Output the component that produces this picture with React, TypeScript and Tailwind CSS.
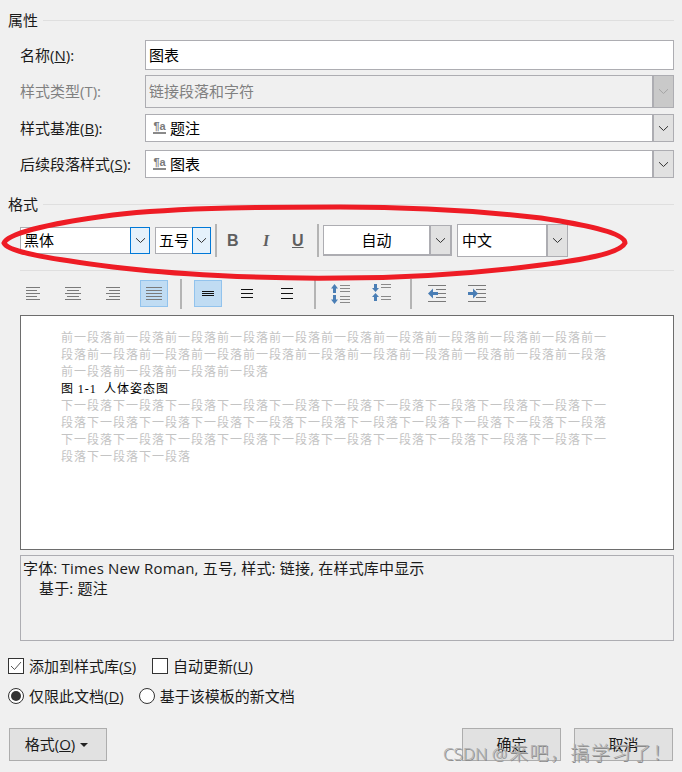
import React from 'react';

const uiFont = "font-['Open_Sans','Noto_Sans_CJK_SC',sans-serif]";

const repeatText = (unit: string, count: number) => unit.repeat(count);

const Chevron: React.FC<{ color?: string }> = ({ color = '#333333' }) => (
    <svg width="11" height="7" viewBox="0 0 11 7" fill="none">
        <path d="M1 1.200 5.500 5.500 10 1.200" stroke={color} strokeWidth="1" />
    </svg>
);

const DropButton: React.FC<{ disabled?: boolean; width?: string }> = ({ disabled, width = 'w-[21px]' }) => (
    <div className={`flex shrink-0 items-center justify-center self-stretch border-l-2 border-[#adadb2] ${width} ${disabled ? 'bg-[#c9c9c9]' : 'bg-[#e1e1e1]'}`}>
        <Chevron color={disabled ? '#a5a5a5' : '#333333'} />
    </div>
);

const StyleIcon: React.FC = () => (
    <span className="mr-[4px] ml-[7px] flex h-[14px] w-[13px] flex-col items-center font-['Liberation_Sans',sans-serif] text-[11px] leading-[10px] font-bold text-[#7a7a7a]">
        <span>¶a</span>
        <span className="mt-[1px] h-[2px] w-[13px] bg-[#8a8a8a]"></span>
    </span>
);

const FormRow: React.FC<{ label: React.ReactNode; height: string; mb: string; disabled?: boolean; children: React.ReactNode }> = ({ label, height, mb, disabled, children }) => (
    <div className={`flex items-center ${height} ${mb}`}>
        <div className={`w-[125px] shrink-0 text-[15px] ${disabled ? 'text-[#808080]' : 'text-[#1a1a1a]'}`}>{label}</div>
        {children}
    </div>
);

const Heading: React.FC<{ title: string; className?: string }> = ({ title, className }) => (
    <div className={`flex items-center pl-[8px] text-[15px] leading-[20px] text-[#1a1a1a] ${className ?? ''}`}>
        <span className="pr-[5px]">{title}</span>
        <div className="h-px flex-1 bg-[#dfdfdf]"></div>
    </div>
);

const VSep: React.FC<{ h: string; mx: string }> = ({ h, mx }) => <div className={`w-[2px] shrink-0 bg-[#b4b4b4] ${h} ${mx}`}></div>;

const Lines: React.FC<{ widths: number[]; align?: 'left' | 'center' | 'right'; color?: string; gap: number }> = ({ widths, align = 'left', color = '#7a7a7a', gap }) => {
    const max = Math.max(...widths);
    return (
        <svg width={max} height={(widths.length - 1) * gap + 1}>
            {widths.map((w, i) => {
                const x = align === 'left' ? 0 : align === 'center' ? (max - w) / 2 : max - w;
                return <rect key={i} x={x} y={i * gap} width={w} height="1" fill={color} />;
            })}
        </svg>
    );
};

const ToolSlot: React.FC<{ active?: boolean; children: React.ReactNode; className?: string }> = ({ active, children, className }) => (
    <div className={`flex h-[27px] w-[28px] shrink-0 items-center justify-center border ${active ? 'border-[#92c3ed] bg-[#c0dcf3]' : 'border-transparent'} ${className ?? ''}`}>
        {children}
    </div>
);

const SpacingIcon: React.FC<{ inward?: boolean }> = ({ inward }) => (
    <svg width="20" height="20" viewBox="0 0 20 20">
        <g fill="#4a7eb5">
            {inward ? (
                <>
                    <path d="M2 0h3v4h2L3.500 8 0 4h2z" />
                    <path d="M3.500 9 7 13H5v4H2v-4H0z" />
                </>
            ) : (
                <>
                    <path d="M3.500 0 7 4.500H5V9H2V4.500H0z" />
                    <path d="M2 11h3v4.500h2L3.500 20 0 15.500h2z" />
                </>
            )}
        </g>
        <g fill="#8a8a8a">
            {inward ? (
                <>
                    <rect x="9" y="0" width="10" height="1" />
                    <rect x="9" y="3" width="10" height="1" />
                    <rect x="9" y="12" width="10" height="1" />
                    <rect x="9" y="15" width="10" height="1" />
                </>
            ) : (
                <>
                    <rect x="9" y="1" width="10" height="1" />
                    <rect x="9" y="4" width="10" height="1" />
                    <rect x="9" y="7" width="10" height="1" />
                    <rect x="9" y="12" width="10" height="1" />
                    <rect x="9" y="15" width="10" height="1" />
                    <rect x="9" y="18" width="10" height="1" />
                </>
            )}
        </g>
    </svg>
);

const IndentIcon: React.FC<{ increase?: boolean }> = ({ increase }) => (
    <svg width="18" height="17" viewBox="0 0 18 17">
        <g fill="#7a7a7a">
            <rect x="0" y="0" width="18" height="1" />
            <rect x="8" y="4" width="10" height="1" />
            <rect x="8" y="8" width="10" height="1" />
            <rect x="8" y="12" width="10" height="1" />
            <rect x="0" y="16" width="18" height="1" />
        </g>
        <path
            d={increase ? 'M0 7h5V3.500L10 8.500l-5 5V10H0z' : 'M10 7H5V3.500L0 8.500l5 5V10h5z'}
            fill="#4a7eb5"
        />
    </svg>
);

const App: React.FC = () => {
    const before = [
        repeatText('前一段落', 10) + '前一',
        repeatText('段落前一', 10) + '段落',
        repeatText('前一段落', 4),
    ];
    const after = [
        repeatText('下一段落', 10) + '下一',
        repeatText('段落下一', 10) + '段落',
        repeatText('下一段落', 10) + '下一',
        '段落下一段落下一段落',
    ];

    return (
        <div className={`relative h-[772px] w-[682px] overflow-hidden bg-[#f0f0f0] ${uiFont}`}>
            <div className="px-[8px] pt-[10px]">
                <Heading title="属性" className="mb-[10px] -ml-[8px]" />

                <div className="pr-0 pl-[12px]">
                    <FormRow label={<>名称(<u>N</u>):</>} height="h-[30px]" mb="mb-[5px]">
                        <div className="flex h-full flex-1 items-center border border-[#adadb2] bg-white pl-[3px] text-[15px] text-black">图表</div>
                    </FormRow>
                    <FormRow label="样式类型(T):" height="h-[33px]" mb="mb-[6px]" disabled>
                        <div className="flex h-full flex-1 items-center border border-[#adadb2] bg-[#f0f0f0] pl-[3px] text-[15px] text-[#808080]">
                            <span className="flex-1">链接段落和字符</span>
                            <DropButton disabled />
                        </div>
                    </FormRow>
                    <FormRow label={<>样式基准(<u>B</u>):</>} height="h-[28px]" mb="mb-[8px]">
                        <div className="flex h-full flex-1 items-center border border-[#adadb2] bg-white text-[15px] text-black">
                            <StyleIcon />
                            <span className="flex-1">题注</span>
                            <DropButton />
                        </div>
                    </FormRow>
                    <FormRow label={<>后续段落样式(<u>S</u>):</>} height="h-[28px]" mb="mb-0">
                        <div className="flex h-full flex-1 items-center border border-[#adadb2] bg-white text-[15px] text-black">
                            <StyleIcon />
                            <span className="flex-1">图表</span>
                            <DropButton />
                        </div>
                    </FormRow>
                </div>

                <Heading title="格式" className="mt-[16px] mb-[10px] -ml-[8px]" />

                <div className="ml-[12px] flex h-[33px] items-center text-[15px] text-black">
                    <div className="flex h-[27px] w-[130px] shrink-0 items-center border border-[#adadb2] bg-white pl-[3px]">
                        <span className="flex-1">黑体</span>
                        <div className="-mr-px flex h-[27px] w-[20px] shrink-0 items-center justify-center border border-[#0078d7] bg-[#e5f1fb]">
                            <Chevron />
                        </div>
                    </div>
                    <div className="ml-[5px] flex h-[27px] w-[56px] shrink-0 items-center border border-[#adadb2] bg-white pl-[3px]">
                        <span className="flex-1">五号</span>
                        <div className="-mr-px flex h-[27px] w-[19px] shrink-0 items-center justify-center border border-[#0078d7] bg-[#e5f1fb]">
                            <Chevron />
                        </div>
                    </div>
                    <VSep h="h-[33px]" mx="ml-[4px]" />
                    <div className="flex w-[100px] shrink-0 items-center text-[16px] text-[#5f5f5f]">
                        <span className="w-[35px] pl-[10px] font-['Liberation_Sans',sans-serif] font-bold">B</span>
                        <span className="w-[29px] pl-[11px] font-['Liberation_Serif',serif] font-bold italic">I</span>
                        <span className="w-[30px] pl-[11px] font-['Liberation_Sans',sans-serif] font-bold underline">U</span>
                    </div>
                    <VSep h="h-[33px]" mx="mr-[4px]" />
                    <div className="flex h-[31px] w-[129px] shrink-0 items-center border border-r-2 border-b-2 border-[#adadb2] bg-white">
                        <span className="flex-1 text-center">自动</span>
                        <DropButton />
                    </div>
                    <div className="ml-[5px] flex h-[33px] w-[111px] shrink-0 items-center border border-[#adadb2] bg-white pl-[4px]">
                        <span className="flex-1">中文</span>
                        <DropButton />
                    </div>
                </div>

                <div className="mt-[13px] mb-[9px] ml-[12px] h-px bg-[#dfdfdf]"></div>

                <div className="ml-[12px] flex h-[27px] items-center">
                    <ToolSlot className="mr-[12px] -ml-[1px]"><Lines widths={[14, 11, 14, 11, 14]} gap={3} /></ToolSlot>
                    <ToolSlot className="mr-[12px]"><Lines widths={[16, 12, 16, 12, 16]} align="center" gap={3} /></ToolSlot>
                    <ToolSlot className="mr-[13px]"><Lines widths={[14, 11, 14, 11, 14]} align="right" gap={3} /></ToolSlot>
                    <ToolSlot active className="mr-[12px]"><Lines widths={[16, 16, 16, 16, 16]} gap={3} /></ToolSlot>
                    <VSep h="h-[30px]" mx="mr-[12px]" />
                    <ToolSlot active className="mr-[11px]"><Lines widths={[12, 12, 12]} gap={2} color="#111111" /></ToolSlot>
                    <ToolSlot className="mr-[12px]"><Lines widths={[12, 12, 12]} gap={4} color="#111111" /></ToolSlot>
                    <ToolSlot className="mr-[13px]"><Lines widths={[12, 12, 12]} gap={5} color="#111111" /></ToolSlot>
                    <VSep h="h-[30px]" mx="mr-[15px]" />
                    <SpacingIcon />
                    <div className="w-[21px]"></div>
                    <SpacingIcon inward />
                    <VSep h="h-[30px]" mx="ml-[18px] mr-[16px]" />
                    <IndentIcon />
                    <div className="w-[22px]"></div>
                    <IndentIcon increase />
                </div>

                <div className="mt-[8px] ml-[12px] h-[235px] border border-[#6d6d6d] bg-white pt-[12px] pl-[40px] font-['Noto_Sans_CJK_SC',sans-serif] text-[12px] leading-[17px] tracking-[1px] whitespace-nowrap text-[#c4c4c4]">
                    {before.map((line, i) => <div key={i}>{line}</div>)}
                    <div className="h-[17px] text-black">图 <span className="font-['Liberation_Serif',serif] leading-none">1-1</span>&nbsp; 人体姿态图</div>
                    {after.map((line, i) => <div key={i}>{line}</div>)}
                </div>

                <div className="mt-[5px] ml-[12px] h-[86px] border border-[#adadb2] bg-[#f0f0f0] pt-[2px] pl-[2px] text-[15px] leading-[20px] tracking-[0.18px] text-[#1a1a1a]">
                    <div>字体: Times New Roman, 五号, 样式: 链接, 在样式库中显示</div>
                    <div className="pl-[16px]">基于: 题注</div>
                </div>

                <div className="mt-[17px] flex h-[16px] items-center text-[15px] text-[#1a1a1a]">
                    <div className="flex h-[16px] w-[16px] items-center justify-center border border-[#333333] bg-white">
                        <svg width="12" height="10" viewBox="0 0 12 10" fill="none"><path d="M1 5 4.500 8.500 11 1" stroke="#555555" strokeWidth="1" /></svg>
                    </div>
                    <span className="ml-[5px]">添加到样式库(<u>S</u>)</span>
                    <div className="ml-[16px] h-[16px] w-[16px] border border-[#333333] bg-white"></div>
                    <span className="ml-[5px]">自动更新(<u>U</u>)</span>
                </div>

                <div className="mt-[14px] flex h-[16px] items-center text-[15px] text-[#1a1a1a]">
                    <div className="flex h-[16px] w-[16px] items-center justify-center rounded-full border border-[#333333] bg-white">
                        <div className="h-[10px] w-[10px] rounded-full bg-[#333333]"></div>
                    </div>
                    <span className="ml-[5px]">仅限此文档(<u>D</u>)</span>
                    <div className="ml-[15px] h-[16px] w-[16px] rounded-full border border-[#333333] bg-white"></div>
                    <span className="ml-[5px]">基于该模板的新文档</span>
                </div>

                <div className="mt-[24px] flex items-start text-[15px] text-[#1a1a1a]">
                    <button className="ml-[1px] flex h-[33px] w-[98px] items-center justify-center border border-[#adadad] bg-[#e1e1e1] pr-[3px]">
                        格式(<u>O</u>)
                        <svg className="ml-[5px]" width="8" height="4" viewBox="0 0 8 4"><path d="M0 0h8L4 4z" fill="#222222" /></svg>
                    </button>
                    <div className="flex-1"></div>
                    <button className="h-[33px] w-[99px] border border-[#adadad] bg-[#e1e1e1]">确定</button>
                    <button className="mr-[1px] ml-[13px] h-[33px] w-[99px] border border-[#adadad] bg-[#e1e1e1]">取消</button>
                </div>
            </div>

            {/* hand drawn annotation over the toolbar */}
            <svg className="pointer-events-none absolute top-0 left-0" width="682" height="772">
                <path
                    d="M4 243 C8 232 60 222 113 215 C180 207 280 207 340 207 C420 207 490 212 541 218 C580 224 625 232 625 243 C620 254 580 260 541 265 C480 273 420 278 340 278 C260 279 170 274 113 267 C60 260 8 253 4 243 Z"
                    fill="none"
                    stroke="#ee1c25"
                    strokeWidth="5"
                />
            </svg>

            {/* CSDN watermark */}
            <div className="pointer-events-none absolute top-[742px] left-[443px] font-['Noto_Sans','Noto_Sans_CJK_SC',sans-serif] text-[17px] leading-[22px] font-light whitespace-nowrap text-[#b0b0b0] [text-shadow:1px_1px_0_#8a8a8a]">
                CSDN @<span className="ml-[2px] text-[19px] tracking-[1.5px]">来吧，搞学习了！</span>
            </div>
        </div>
    );
};

export default App;
